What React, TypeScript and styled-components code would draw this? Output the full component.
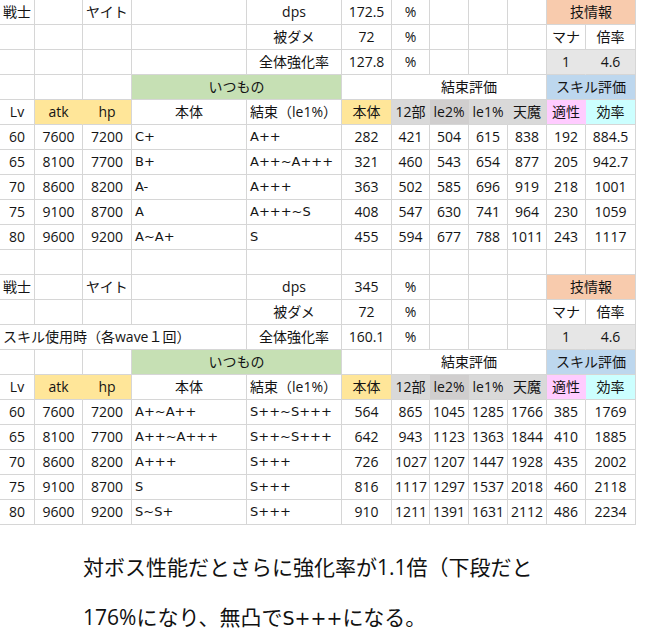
import { FC } from 'react'
import styled, { createGlobalStyle, css } from 'styled-components'

const GlobalStyle = createGlobalStyle`
  body {
    margin: 0;
    background: #fff;
    color: #141414;
    font-family: "Open Sans", "Noto Sans CJK JP", sans-serif;
  }
`

const YELLOW = '#ffe699'
const GREEN = '#c6e0b4'
const ORANGE = '#f8cbad'
const BLUE = '#bdd7ee'
const LIGHT = '#e6e6e6'
const GRAY = '#d9d9d9'
const DARK = '#d0cece'
const PINK = '#ffccff'
const CYAN = '#ccffff'

const widths = [35, 48, 49, 115, 95, 50, 38, 39, 39, 39, 39, 50]

const Sheet = styled.table`
  border-collapse: separate;
  border-spacing: 0;
  table-layout: fixed;
  width: 636px;
  font-size: 14px;
`

const Col = styled.col<{ $w: number }>`
  width: ${p => p.$w}px;
`

const Row = styled.tr`
  height: 25px;
`

type Align = 'left' | 'center'

const Cell = styled.td<{ $align?: Align; $bg?: string; $join?: boolean; $rank?: boolean }>`
  height: 25px;
  box-sizing: border-box;
  padding: 0 3px;
  line-height: 24px;
  text-align: ${p => p.$align ?? 'center'};
  background: ${p => p.$bg ?? '#fff'};
  border-right: 1px solid ${p => (p.$join && p.$bg ? p.$bg : '#d6d6d6')};
  border-bottom: 1px solid #d6d6d6;
  white-space: nowrap;
  overflow: hidden;

  ${p =>
    p.$rank &&
    css`
      font-family: "DejaVu Sans", "Noto Sans CJK JP", sans-serif;
      font-size: 13px;
    `}
`

const Note = styled.p`
  margin: 17px 0 0;
  padding-left: 83px;
  font-size: 21px;
  line-height: 50px;
  color: #111;
`

const Grade = styled.span`
  font-family: "DejaVu Sans", sans-serif;
  font-size: 19px;
`

type DataRow = [string, string, string, string, string, ...string[]]

interface BlockProps {
  dps: string
  rate: string
  note?: string
  rows: DataRow[]
}

const Empty: FC<{ n: number }> = ({ n }) => (
  <>
    {Array.from({ length: n }, (_, i) => (
      <Cell key={i} />
    ))}
  </>
)

const Block: FC<BlockProps> = ({ dps, rate, note, rows }) => (
  <>
    <Row>
      <Cell $align="left">戦士</Cell>
      <Cell />
      <Cell $align="left">ヤイト</Cell>
      <Cell />
      <Cell>dps</Cell>
      <Cell>{dps}</Cell>
      <Cell>%</Cell>
      <Empty n={3} />
      <Cell colSpan={2} $bg={ORANGE}>技情報</Cell>
    </Row>
    <Row>
      <Empty n={4} />
      <Cell>被ダメ</Cell>
      <Cell>72</Cell>
      <Cell>%</Cell>
      <Empty n={3} />
      <Cell>マナ</Cell>
      <Cell>倍率</Cell>
    </Row>
    <Row>
      {note ? (
        <Cell colSpan={4} $align="left">{note}</Cell>
      ) : (
        <Empty n={4} />
      )}
      <Cell>全体強化率</Cell>
      <Cell>{rate}</Cell>
      <Cell>%</Cell>
      <Empty n={3} />
      <Cell $bg={LIGHT} $join>1</Cell>
      <Cell $bg={LIGHT}>4.6</Cell>
    </Row>
    <Row>
      <Empty n={3} />
      <Cell colSpan={2} $bg={GREEN}>いつもの</Cell>
      <Cell />
      <Cell colSpan={4}>結束評価</Cell>
      <Cell colSpan={2} $bg={BLUE}>スキル評価</Cell>
    </Row>
    <Row>
      <Cell>Lv</Cell>
      <Cell $bg={YELLOW} $join>atk</Cell>
      <Cell $bg={YELLOW}>hp</Cell>
      <Cell>本体</Cell>
      <Cell $align="left">結束（le1%）</Cell>
      <Cell $bg={YELLOW}>本体</Cell>
      <Cell $bg={GRAY} $join>12部</Cell>
      <Cell $bg={DARK} $join>le2%</Cell>
      <Cell $bg={GRAY} $join>le1%</Cell>
      <Cell $bg={GRAY}>天魔</Cell>
      <Cell $bg={PINK} $join>適性</Cell>
      <Cell $bg={CYAN}>効率</Cell>
    </Row>
    {rows.map(([lv, atk, hp, body, bond, ...vals]) => (
      <Row key={lv}>
        <Cell>{lv}</Cell>
        <Cell>{atk}</Cell>
        <Cell>{hp}</Cell>
        <Cell $align="left" $rank>{body}</Cell>
        <Cell $align="left" $rank>{bond}</Cell>
        {vals.map((v, i) => (
          <Cell key={i}>{v}</Cell>
        ))}
      </Row>
    ))}
  </>
)

const upper: DataRow[] = [
  ['60', '7600', '7200', 'C+', 'A++', '282', '421', '504', '615', '838', '192', '884.5'],
  ['65', '8100', '7700', 'B+', 'A++~A+++', '321', '460', '543', '654', '877', '205', '942.7'],
  ['70', '8600', '8200', 'A-', 'A+++', '363', '502', '585', '696', '919', '218', '1001'],
  ['75', '9100', '8700', 'A', 'A+++~S', '408', '547', '630', '741', '964', '230', '1059'],
  ['80', '9600', '9200', 'A~A+', 'S', '455', '594', '677', '788', '1011', '243', '1117'],
]

const lower: DataRow[] = [
  ['60', '7600', '7200', 'A+~A++', 'S++~S+++', '564', '865', '1045', '1285', '1766', '385', '1769'],
  ['65', '8100', '7700', 'A++~A+++', 'S++~S+++', '642', '943', '1123', '1363', '1844', '410', '1885'],
  ['70', '8600', '8200', 'A+++', 'S+++', '726', '1027', '1207', '1447', '1928', '435', '2002'],
  ['75', '9100', '8700', 'S', 'S+++', '816', '1117', '1297', '1537', '2018', '460', '2118'],
  ['80', '9600', '9200', 'S~S+', 'S+++', '910', '1211', '1391', '1631', '2112', '486', '2234'],
]

const App: FC = () => {
  return (
    <>
      <GlobalStyle />
      <Sheet>
        <colgroup>
          {widths.map((w, i) => (
            <Col key={i} $w={w} />
          ))}
        </colgroup>
        <tbody>
          <Block dps="172.5" rate="127.8" rows={upper} />
          <Row>
            <Empty n={12} />
          </Row>
          <Block dps="345" rate="160.1" note="スキル使用時（各wave１回）" rows={lower} />
        </tbody>
      </Sheet>
      <Note>
        対ボス性能だとさらに強化率が1.1倍（下段だと
        <br />
        176%になり、無凸で<Grade>S+++</Grade>になる。
      </Note>
    </>
  )
}

export default App
